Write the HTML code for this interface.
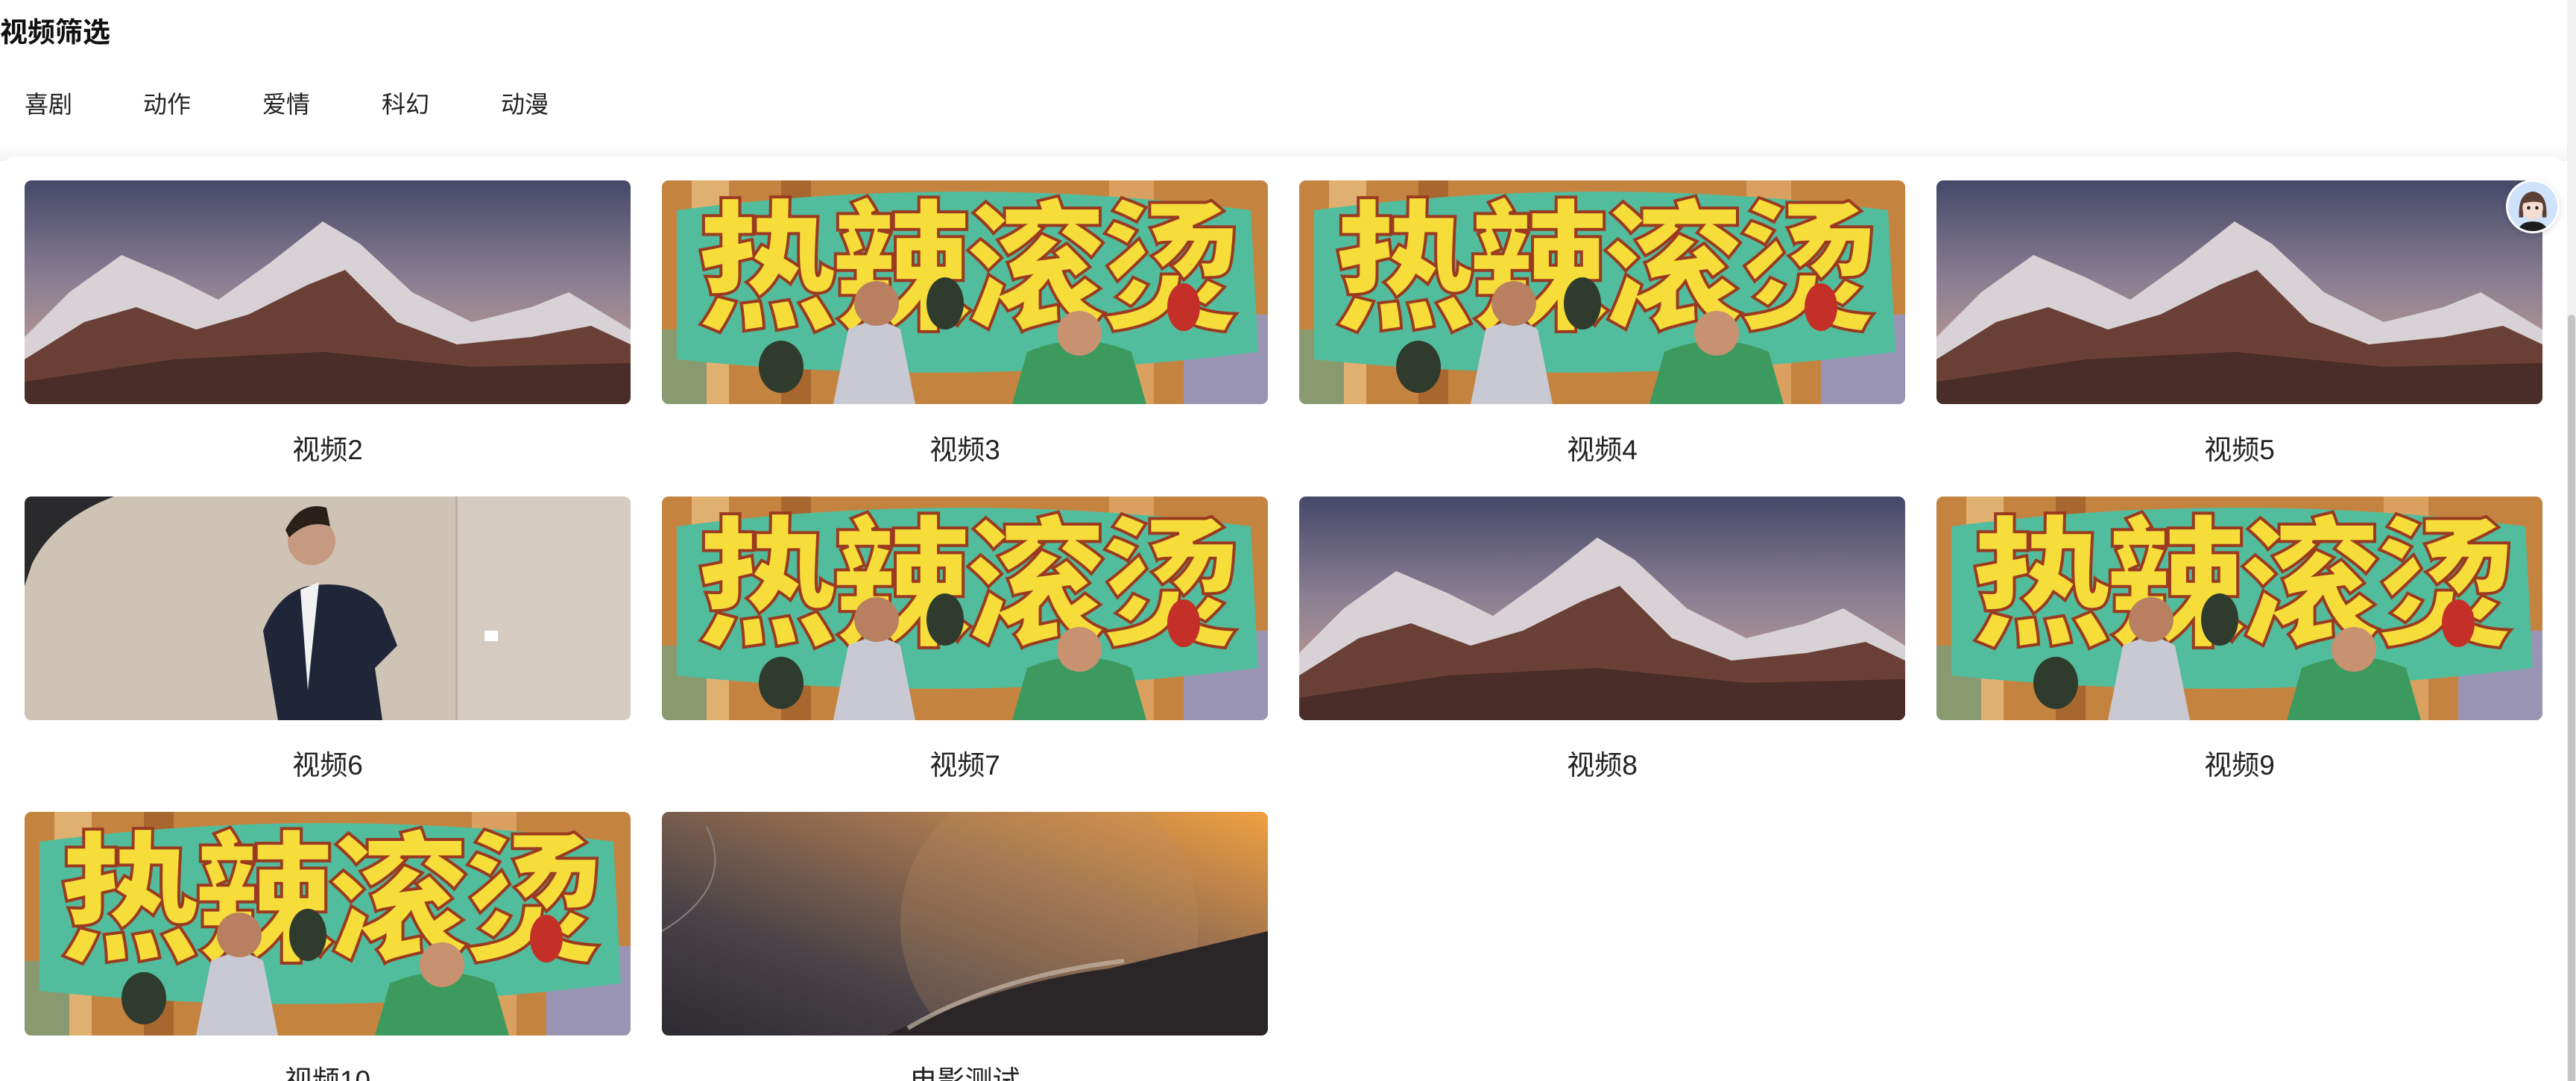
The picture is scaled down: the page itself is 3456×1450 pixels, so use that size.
<!DOCTYPE html>
<html><head><meta charset="utf-8">
<style>
*{margin:0;padding:0;box-sizing:border-box}
html,body{width:3456px;height:1450px;overflow:hidden;background:#fff;font-family:"Liberation Sans","Noto Sans CJK SC",sans-serif;color:#222}
#w{position:relative;width:3456px;height:1450px;overflow:hidden}
.title{position:absolute;left:0;top:21px;font-size:37px;font-weight:bold;color:#111;line-height:46px}
.tab{position:absolute;top:118px;font-size:32px;color:#222;line-height:44px}
.band{position:absolute;left:0;top:196px;width:3444px;height:20px;background:linear-gradient(#fff,#f3f3f3)}
.panel{position:absolute;left:0;top:210px;width:3444px;height:1240px;background:#fff;border-radius:22px 22px 0 0}
.sb{position:absolute;left:3444px;top:0;width:12px;height:1450px;background:#f1f1f1}
.thumb{position:absolute;left:3445px;top:422px;width:10px;height:1028px;background:#c4c4c4;border-radius:5px 5px 0 0}
.card{position:absolute;width:813px;height:300px;border-radius:9px;overflow:hidden}
.card svg{display:block;width:813px;height:300px}
.lbl{position:absolute;width:813px;text-align:center;font-size:37px;color:#222;line-height:44px}
.av{position:absolute;left:3362px;top:241px;width:72px;height:72px;border-radius:50%;background:#cfe2fb;border:3px solid #fff;box-shadow:0 2px 8px rgba(0,0,0,.15);overflow:hidden}
</style></head><body><div id="w">
<div class="title">视频筛选</div>
<div class="tab" style="left:33px">喜剧</div>
<div class="tab" style="left:192px">动作</div>
<div class="tab" style="left:352px">爱情</div>
<div class="tab" style="left:512px">科幻</div>
<div class="tab" style="left:672px">动漫</div>
<div class="band"></div>
<div class="panel"></div>

<svg width="0" height="0" style="position:absolute">
<defs>
<linearGradient id="sky" x1="0" y1="0" x2="0" y2="1"><stop offset="0" stop-color="#464869"/><stop offset=".45" stop-color="#8a7f93"/><stop offset=".75" stop-color="#b49591"/></linearGradient>
<linearGradient id="gl" x1="1" y1="0" x2="0" y2="1"><stop offset="0" stop-color="#f0a040"/><stop offset=".35" stop-color="#9a7050"/><stop offset=".7" stop-color="#4a4348"/><stop offset="1" stop-color="#2c2a30"/></linearGradient>
</defs>
</svg>

<div class="card" style="left:33px;top:242px"><svg viewBox="0 0 813 300" preserveAspectRatio="none"><rect width="813" height="300" fill="url(#sky)"/><polygon points="0,210 60,150 130,100 200,130 260,160 330,110 400,55 450,85 520,150 600,190 680,170 730,150 813,200 813,300 0,300" fill="#d8d2d6"/><polygon points="0,240 80,190 150,170 230,200 300,180 380,140 430,120 500,190 580,220 680,210 760,195 813,220 813,300 0,300" fill="#6a4036"/><polygon points="0,270 200,240 400,230 600,250 813,245 813,300 0,300" fill="#4a2c28"/></svg></div>
<div class="lbl" style="left:33px;top:582px">视频2</div>

<div class="card" style="left:888px;top:242px"><svg viewBox="0 0 813 300" preserveAspectRatio="none"><rect width="813" height="300" fill="#c48440"/><rect x="40" width="50" height="300" fill="#e0b070"/><rect x="160" width="40" height="300" fill="#a8672e"/><rect x="600" width="60" height="300" fill="#d9a060"/><rect x="700" y="180" width="113" height="120" fill="#9a94b4"/><rect x="0" y="200" width="60" height="100" fill="#8a9a70"/><path d="M20,40 Q400,-10 790,40 L800,230 Q400,280 20,240Z" fill="#52bd9c"/><text x="406" y="185" text-anchor="middle" font-family="Noto Sans CJK SC,sans-serif" font-weight="900" font-size="190" fill="#f6dd3a" stroke="#9a3a20" stroke-width="4" letter-spacing="-10">热辣滚烫</text><path d="M230,300 L250,200 Q290,180 320,200 L340,300Z" fill="#c9c9d4"/><circle cx="288" cy="165" r="30" fill="#b88060"/><ellipse cx="160" cy="250" rx="30" ry="35" fill="#2f3b2c"/><ellipse cx="380" cy="165" rx="25" ry="35" fill="#2f3b2c"/><path d="M470,300 L490,230 Q560,200 630,230 L650,300Z" fill="#3d9a5e"/><circle cx="560" cy="205" r="30" fill="#c89270"/><ellipse cx="700" cy="170" rx="22" ry="32" fill="#c43028"/></svg></div>
<div class="lbl" style="left:888px;top:582px">视频3</div>

<div class="card" style="left:1743px;top:242px"><svg viewBox="0 0 813 300" preserveAspectRatio="none"><rect width="813" height="300" fill="#c48440"/><rect x="40" width="50" height="300" fill="#e0b070"/><rect x="160" width="40" height="300" fill="#a8672e"/><rect x="600" width="60" height="300" fill="#d9a060"/><rect x="700" y="180" width="113" height="120" fill="#9a94b4"/><rect x="0" y="200" width="60" height="100" fill="#8a9a70"/><path d="M20,40 Q400,-10 790,40 L800,230 Q400,280 20,240Z" fill="#52bd9c"/><text x="406" y="185" text-anchor="middle" font-family="Noto Sans CJK SC,sans-serif" font-weight="900" font-size="190" fill="#f6dd3a" stroke="#9a3a20" stroke-width="4" letter-spacing="-10">热辣滚烫</text><path d="M230,300 L250,200 Q290,180 320,200 L340,300Z" fill="#c9c9d4"/><circle cx="288" cy="165" r="30" fill="#b88060"/><ellipse cx="160" cy="250" rx="30" ry="35" fill="#2f3b2c"/><ellipse cx="380" cy="165" rx="25" ry="35" fill="#2f3b2c"/><path d="M470,300 L490,230 Q560,200 630,230 L650,300Z" fill="#3d9a5e"/><circle cx="560" cy="205" r="30" fill="#c89270"/><ellipse cx="700" cy="170" rx="22" ry="32" fill="#c43028"/></svg></div>
<div class="lbl" style="left:1743px;top:582px">视频4</div>

<div class="card" style="left:2598px;top:242px"><svg viewBox="0 0 813 300" preserveAspectRatio="none"><rect width="813" height="300" fill="url(#sky)"/><polygon points="0,210 60,150 130,100 200,130 260,160 330,110 400,55 450,85 520,150 600,190 680,170 730,150 813,200 813,300 0,300" fill="#d8d2d6"/><polygon points="0,240 80,190 150,170 230,200 300,180 380,140 430,120 500,190 580,220 680,210 760,195 813,220 813,300 0,300" fill="#6a4036"/><polygon points="0,270 200,240 400,230 600,250 813,245 813,300 0,300" fill="#4a2c28"/></svg></div>
<div class="lbl" style="left:2598px;top:582px">视频5</div>

<div class="card" style="left:33px;top:666px"><svg viewBox="0 0 813 300" preserveAspectRatio="none"><rect width="813" height="300" fill="#cfc3b6"/><rect x="580" width="233" height="300" fill="#d6cbc0"/><rect x="578" width="3" height="300" fill="#bfb2a4"/><path d="M0,0 L120,0 Q40,30 10,90 L0,120Z" fill="#2a2a2c"/><path d="M340,300 L320,180 Q340,130 380,120 Q450,110 480,150 L500,200 L470,230 L480,300Z" fill="#1e2638"/><path d="M370,125 L395,115 L380,260 Z" fill="#f2f2f2"/><circle cx="385" cy="60" r="32" fill="#c59a80"/><path d="M350,45 Q370,5 405,15 L410,40 Q380,30 355,55Z" fill="#2a201a"/><rect x="617" y="180" width="18" height="14" fill="#fff"/></svg></div>
<div class="lbl" style="left:33px;top:1005px">视频6</div>

<div class="card" style="left:888px;top:666px"><svg viewBox="0 0 813 300" preserveAspectRatio="none"><rect width="813" height="300" fill="#c48440"/><rect x="40" width="50" height="300" fill="#e0b070"/><rect x="160" width="40" height="300" fill="#a8672e"/><rect x="600" width="60" height="300" fill="#d9a060"/><rect x="700" y="180" width="113" height="120" fill="#9a94b4"/><rect x="0" y="200" width="60" height="100" fill="#8a9a70"/><path d="M20,40 Q400,-10 790,40 L800,230 Q400,280 20,240Z" fill="#52bd9c"/><text x="406" y="185" text-anchor="middle" font-family="Noto Sans CJK SC,sans-serif" font-weight="900" font-size="190" fill="#f6dd3a" stroke="#9a3a20" stroke-width="4" letter-spacing="-10">热辣滚烫</text><path d="M230,300 L250,200 Q290,180 320,200 L340,300Z" fill="#c9c9d4"/><circle cx="288" cy="165" r="30" fill="#b88060"/><ellipse cx="160" cy="250" rx="30" ry="35" fill="#2f3b2c"/><ellipse cx="380" cy="165" rx="25" ry="35" fill="#2f3b2c"/><path d="M470,300 L490,230 Q560,200 630,230 L650,300Z" fill="#3d9a5e"/><circle cx="560" cy="205" r="30" fill="#c89270"/><ellipse cx="700" cy="170" rx="22" ry="32" fill="#c43028"/></svg></div>
<div class="lbl" style="left:888px;top:1005px">视频7</div>

<div class="card" style="left:1743px;top:666px"><svg viewBox="0 0 813 300" preserveAspectRatio="none"><rect width="813" height="300" fill="url(#sky)"/><polygon points="0,210 60,150 130,100 200,130 260,160 330,110 400,55 450,85 520,150 600,190 680,170 730,150 813,200 813,300 0,300" fill="#d8d2d6"/><polygon points="0,240 80,190 150,170 230,200 300,180 380,140 430,120 500,190 580,220 680,210 760,195 813,220 813,300 0,300" fill="#6a4036"/><polygon points="0,270 200,240 400,230 600,250 813,245 813,300 0,300" fill="#4a2c28"/></svg></div>
<div class="lbl" style="left:1743px;top:1005px">视频8</div>

<div class="card" style="left:2598px;top:666px"><svg viewBox="0 0 813 300" preserveAspectRatio="none"><rect width="813" height="300" fill="#c48440"/><rect x="40" width="50" height="300" fill="#e0b070"/><rect x="160" width="40" height="300" fill="#a8672e"/><rect x="600" width="60" height="300" fill="#d9a060"/><rect x="700" y="180" width="113" height="120" fill="#9a94b4"/><rect x="0" y="200" width="60" height="100" fill="#8a9a70"/><path d="M20,40 Q400,-10 790,40 L800,230 Q400,280 20,240Z" fill="#52bd9c"/><text x="406" y="185" text-anchor="middle" font-family="Noto Sans CJK SC,sans-serif" font-weight="900" font-size="190" fill="#f6dd3a" stroke="#9a3a20" stroke-width="4" letter-spacing="-10">热辣滚烫</text><path d="M230,300 L250,200 Q290,180 320,200 L340,300Z" fill="#c9c9d4"/><circle cx="288" cy="165" r="30" fill="#b88060"/><ellipse cx="160" cy="250" rx="30" ry="35" fill="#2f3b2c"/><ellipse cx="380" cy="165" rx="25" ry="35" fill="#2f3b2c"/><path d="M470,300 L490,230 Q560,200 630,230 L650,300Z" fill="#3d9a5e"/><circle cx="560" cy="205" r="30" fill="#c89270"/><ellipse cx="700" cy="170" rx="22" ry="32" fill="#c43028"/></svg></div>
<div class="lbl" style="left:2598px;top:1005px">视频9</div>

<div class="card" style="left:33px;top:1089px"><svg viewBox="0 0 813 300" preserveAspectRatio="none"><rect width="813" height="300" fill="#c48440"/><rect x="40" width="50" height="300" fill="#e0b070"/><rect x="160" width="40" height="300" fill="#a8672e"/><rect x="600" width="60" height="300" fill="#d9a060"/><rect x="700" y="180" width="113" height="120" fill="#9a94b4"/><rect x="0" y="200" width="60" height="100" fill="#8a9a70"/><path d="M20,40 Q400,-10 790,40 L800,230 Q400,280 20,240Z" fill="#52bd9c"/><text x="406" y="185" text-anchor="middle" font-family="Noto Sans CJK SC,sans-serif" font-weight="900" font-size="190" fill="#f6dd3a" stroke="#9a3a20" stroke-width="4" letter-spacing="-10">热辣滚烫</text><path d="M230,300 L250,200 Q290,180 320,200 L340,300Z" fill="#c9c9d4"/><circle cx="288" cy="165" r="30" fill="#b88060"/><ellipse cx="160" cy="250" rx="30" ry="35" fill="#2f3b2c"/><ellipse cx="380" cy="165" rx="25" ry="35" fill="#2f3b2c"/><path d="M470,300 L490,230 Q560,200 630,230 L650,300Z" fill="#3d9a5e"/><circle cx="560" cy="205" r="30" fill="#c89270"/><ellipse cx="700" cy="170" rx="22" ry="32" fill="#c43028"/></svg></div>
<div class="lbl" style="left:33px;top:1428px">视频10</div>

<div class="card" style="left:888px;top:1089px"><svg viewBox="0 0 813 300" preserveAspectRatio="none"><rect width="813" height="300" fill="url(#gl)"/><circle cx="520" cy="150" r="200" fill="#c09060" opacity=".25"/><path d="M300,300 Q450,230 600,210 L813,160 L813,300Z" fill="#2a2628"/><path d="M330,290 Q450,220 620,200" stroke="#c8b8a8" stroke-width="6" fill="none" opacity=".7"/><path d="M0,160 Q100,100 60,20" stroke="#8a8080" stroke-width="2" fill="none"/></svg></div>
<div class="lbl" style="left:888px;top:1428px">电影测试</div>

<div class="av"><svg viewBox="0 0 72 72" width="66" height="66"><rect width="72" height="72" fill="#cfe2fb"/><path d="M16,52 Q14,16 36,14 Q58,16 56,52 L50,52 L50,30 L22,30 L22,52Z" fill="#5a4034"/><ellipse cx="36" cy="38" rx="15" ry="17" fill="#f6dcd0"/><path d="M20,32 Q26,18 40,20 Q52,22 52,32 Q40,26 20,32Z" fill="#5a4034"/><circle cx="30" cy="38" r="2.5" fill="#222"/><circle cx="42" cy="38" r="2.5" fill="#222"/><path d="M14,72 Q18,58 36,58 Q54,58 58,72Z" fill="#1c1c1c"/></svg></div>

<div class="sb"></div>
<div class="thumb"></div>
</div></body></html>
